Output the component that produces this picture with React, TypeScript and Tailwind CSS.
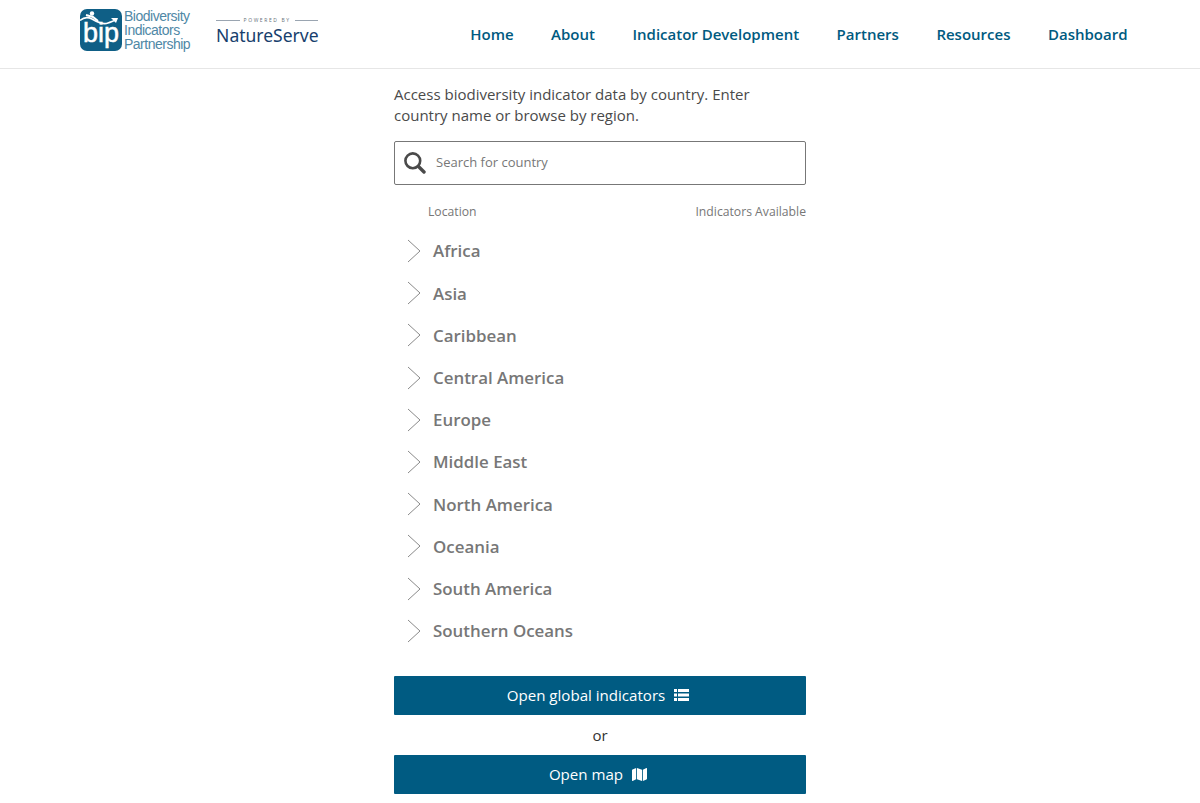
import React from 'react';
import { FaMap } from 'react-icons/fa';

const NAV = ['Home', 'About', 'Indicator Development', 'Partners', 'Resources', 'Dashboard'];
const REGIONS = [
  'Africa',
  'Asia',
  'Caribbean',
  'Central America',
  'Europe',
  'Middle East',
  'North America',
  'Oceania',
  'South America',
  'Southern Oceans',
];

function BipLogo() {
  return (
    <div className="relative w-[42px] h-[42px] rounded-[7px] bg-[#0f5f86]">
      <svg className="absolute left-0 top-0" width="42" height="42" viewBox="0 0 42 42" fill="none">
        <path d="M0 11.5 C4 8 8 8 12 10 C17 13 23 16 28 14 C31 13 33 12 36 11" stroke="#fff" strokeWidth="1.6" />
        <circle cx="12" cy="4.5" r="2.2" fill="#fff" />
        <path d="M6 6 L13 8 L18 12" stroke="#fff" strokeWidth="2" />
        <path d="M31 9 L38 9 L36 14 Z" fill="#fff" />
      </svg>
      <span className="absolute left-0 right-0 top-[9px] text-center font-['Liberation_Sans',sans-serif] text-[27px] leading-[30px] [-webkit-text-stroke:0.5px_white] text-white">
        bip
      </span>
    </div>
  );
}

function Logos() {
  return (
    <div className="flex items-center">
      <BipLogo />
      <div className="ml-[2px] font-['Liberation_Sans',sans-serif] text-[14px] leading-[14px] tracking-[-0.5px] text-[#4f88a6]">
        <div>Biodiversity</div>
        <div>Indicators</div>
        <div>Partnership</div>
      </div>
      <div className="ml-[26px] mt-[4px] w-[102px]">
        <div className="flex items-center gap-[4px]">
          <span className="h-px flex-1 bg-[#9aa5b1]" />
          <span className="text-[5px] leading-[6px] tracking-[1.6px] text-[#66707a]">POWERED BY</span>
          <span className="h-px flex-1 bg-[#9aa5b1]" />
        </div>
        <div className="font-['Noto_Sans',sans-serif] text-[17.5px] leading-[24px] text-[#17406d] whitespace-nowrap">
          NatureServe
        </div>
      </div>
    </div>
  );
}

function SearchIcon() {
  return (
    <svg width="22" height="22" viewBox="0 0 22 22" fill="none" stroke="#4a4a4a">
      <circle cx="8.8" cy="8.8" r="7.4" strokeWidth="2.6" />
      <path d="M14.5 14.5 L20 20" strokeWidth="3.4" strokeLinecap="round" />
    </svg>
  );
}

function ListIcon() {
  return (
    <svg width="15" height="12" viewBox="0 0 15 12" fill="#fff">
      <rect x="0" y="0" width="3" height="3" />
      <rect x="0" y="4.5" width="3" height="3" />
      <rect x="0" y="9" width="3" height="3" />
      <rect x="4" y="0" width="11" height="3" />
      <rect x="4" y="4.5" width="11" height="3" />
      <rect x="4" y="9" width="11" height="3" />
    </svg>
  );
}

function Chevron() {
  return (
    <svg width="14" height="24" viewBox="0 0 14 24" fill="none" stroke="#8a8a8a" strokeWidth="1">
      <path d="M1 1 L13 12 L1 23" />
    </svg>
  );
}

export default function App() {
  return (
    <div className="min-h-screen h-[803px] overflow-hidden bg-white font-['Open_Sans',sans-serif]">
      <header className="h-[69px] border-b border-[#e6e6e6] pl-[80px] pr-[72.5px] flex items-center justify-between">
        <div className="-mt-[8px]">
          <Logos />
        </div>
        <nav className="flex gap-[37.5px]">
          {NAV.map((item) => (
            <a key={item} className="text-[15px] leading-[20px] font-semibold text-[#005a80]">
              {item}
            </a>
          ))}
        </nav>
      </header>

      <main className="mx-auto w-[412px] pt-[15px]">
        <p className="text-[15px] leading-[21px] text-[#4a4a4a] pr-[20px]">
          Access biodiversity indicator data by country. Enter country name or browse by region.
        </p>

        <div className="mt-[15px] h-[44px] flex items-center border border-[#777] rounded-[2px] pl-[9px]">
          <SearchIcon />
          <span className="ml-[10px] text-[13px] text-[#777]">Search for country</span>
        </div>

        <div className="mt-[18px] flex justify-between text-[12.2px] leading-[17px] text-[#777]">
          <span className="ml-[34px]">Location</span>
          <span>Indicators Available</span>
        </div>

        <ul className="mt-[10px]">
          {REGIONS.map((region) => (
            <li key={region} className="h-[42.2px] flex items-center pl-[13px]">
              <Chevron />
              <span className="ml-[12px] text-[16.9px] font-semibold text-[#777]">{region}</span>
            </li>
          ))}
        </ul>

        <button className="mt-[24px] w-full h-[39px] pr-[4px] flex items-center justify-center gap-[9px] rounded-[1px] bg-[#005b82] text-[15.1px] text-white">
          Open global indicators
          <ListIcon />
        </button>
        <div className="h-[40px] flex items-center justify-center text-[15px] text-[#333]">or</div>
        <button className="w-full h-[39px] pr-[4px] flex items-center justify-center gap-[9px] rounded-[1px] bg-[#005b82] text-[15.1px] text-white">
          Open map
          <FaMap className="w-[15px] h-[15px]" preserveAspectRatio="none" />
        </button>
      </main>
    </div>
  );
}
